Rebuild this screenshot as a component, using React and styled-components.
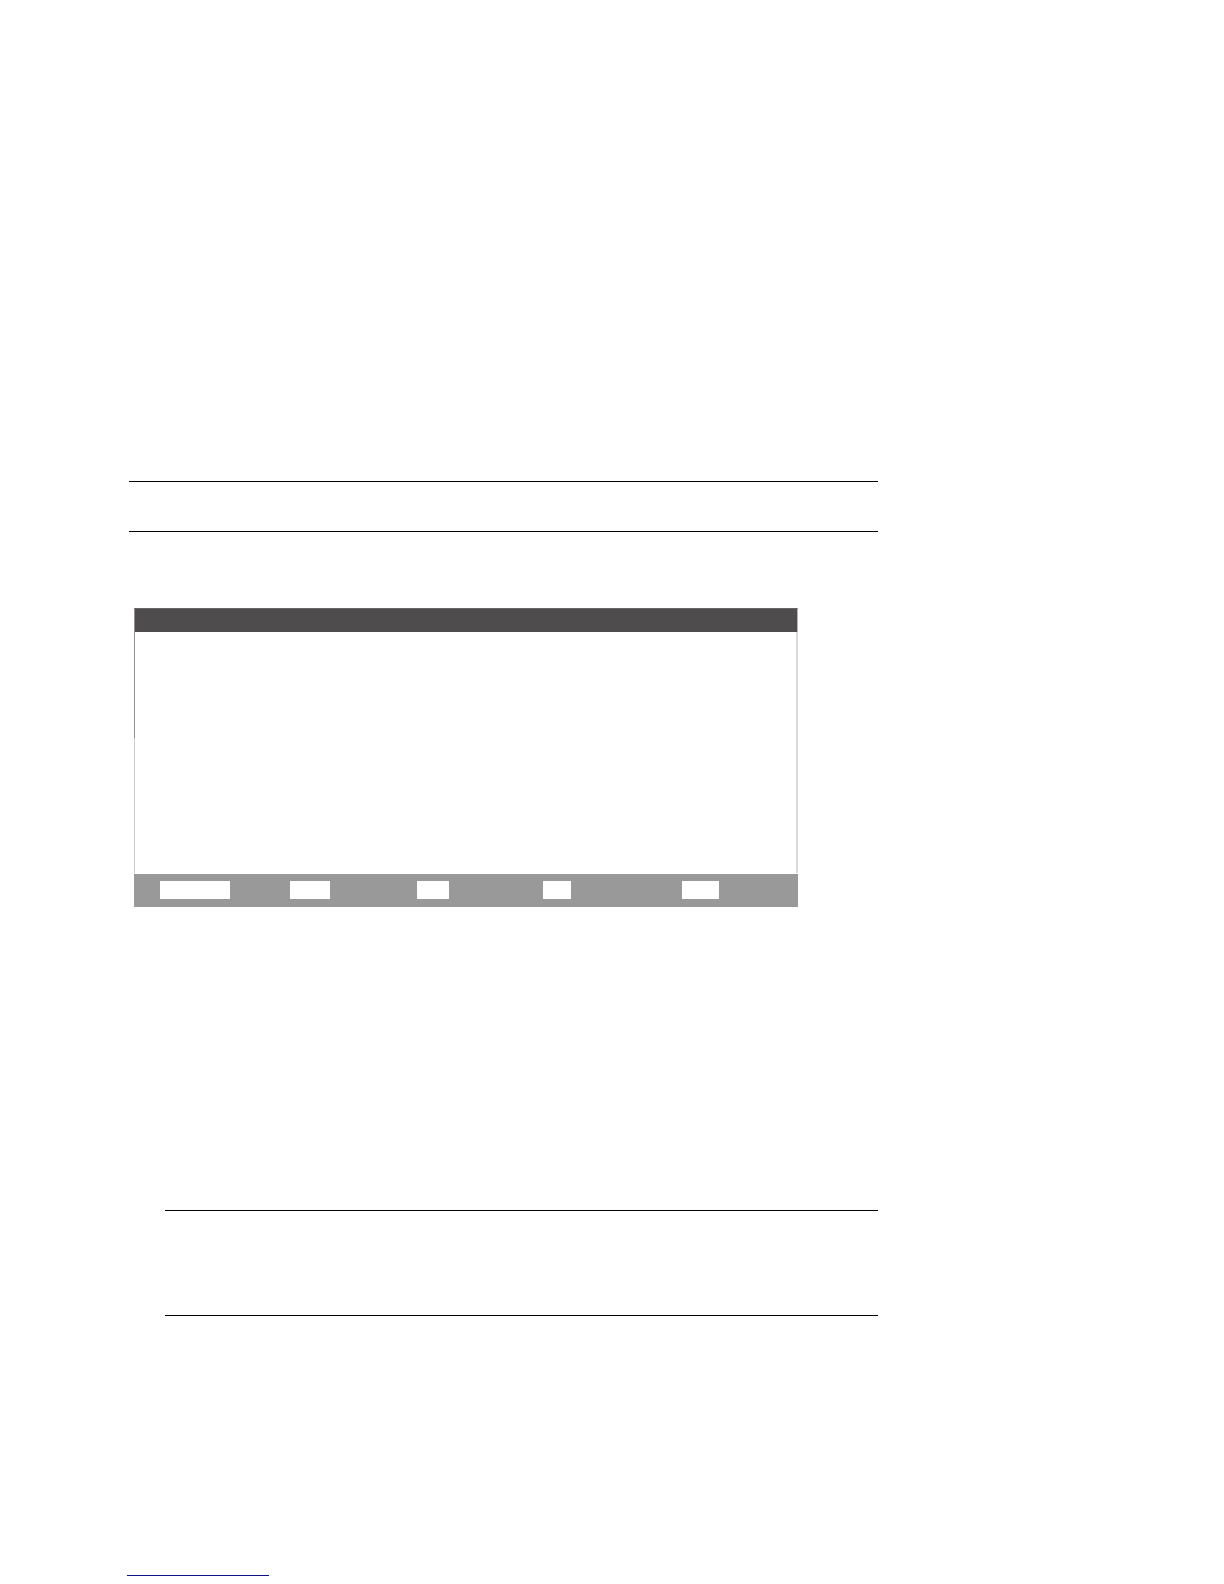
import React from "react";
import styled, { createGlobalStyle } from "styled-components";

const GlobalStyle = createGlobalStyle`
  * { box-sizing: border-box; }
  body {
    margin: 0;
    background: #fff;
    font-family: "Liberation Sans", Arial, sans-serif;
  }
`;

const Page = styled.main`
  display: flex;
  flex-direction: column;
  padding: 481px 346px 8px 129px;
`;

const RuledNote = styled.section`
  height: ${(p) => p.$height}px;
  margin-left: ${(p) => p.$indent}px;
  border-top: 1px solid #000;
  border-bottom: 1px solid #000;
`;

const Panel = styled.section`
  display: flex;
  flex-direction: column;
  margin: 76px 80px 303px 5px;
`;

const TitleBar = styled.header`
  height: 24px;
  background: #4e4c4d;
  border: 1px solid #909090;
  border-top-color: #686667;
  border-right-color: #b4b4b4;
  border-bottom: 0;
`;

const PanelBody = styled.div`
  display: flex;
  height: 241px;
  margin-bottom: 1px;
  border-right: 2px solid #dadada;
`;

const LeftEdge = styled.div`
  display: flex;
  flex-direction: column;
  width: 1px;
  background: #ccc;

  &::before {
    content: "";
    height: 106px;
    background: #909090;
  }
`;

const StatusBar = styled.footer`
  display: grid;
  grid-template-columns: 130fr 127fr 126fr 139fr 116fr;
  height: 33px;
  padding-left: 26px;
  background: #999;
`;

const Field = styled.span`
  width: ${(p) => p.$width}px;
  height: 18px;
  margin-top: 7px;
  background: #fff;
`;

const FootRule = styled.hr`
  width: 142px;
  height: 1px;
  margin: 259px 0 0 -2px;
  border: 0;
  background: #10108a;
`;

const fieldWidths = [70, 40, 32, 28, 37];

export default function App() {
  return (
    <>
      <GlobalStyle />
      <Page>
        <RuledNote $height={51} $indent={0} />
        <Panel>
          <TitleBar />
          <PanelBody>
            <LeftEdge />
          </PanelBody>
          <StatusBar>
            {fieldWidths.map((width) => (
              <Field key={width} $width={width} />
            ))}
          </StatusBar>
        </Panel>
        <RuledNote $height={106} $indent={36} />
        <FootRule />
      </Page>
    </>
  );
}
